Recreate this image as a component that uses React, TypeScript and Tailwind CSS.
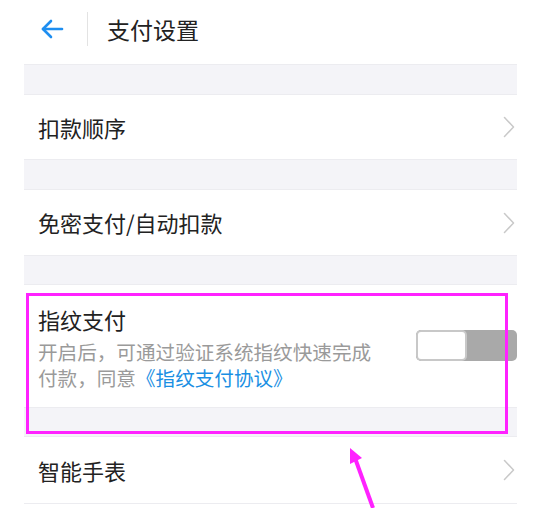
const font = { fontFamily: '"Noto Sans CJK SC", "Noto Sans", sans-serif' }

function Gap({ h }: { h: string }) {
  return <div className={`${h} bg-[#f4f4f8] border-y border-[#ececf0]`} />
}

function Chevron() {
  return (
    <svg width="12" height="22" viewBox="0 0 12 22" fill="none" stroke="#c9c9c9" strokeWidth="1.5" strokeLinecap="round" strokeLinejoin="round">
      <path d="M1.5 1.5L10.5 11L1.5 20.5" />
    </svg>
  )
}

function Row({ label, h }: { label: string; h: string }) {
  return (
    <div className={`${h} flex items-center justify-between pl-[14px] pr-[2px]`}>
      <span className="text-[22px] text-[#222]">{label}</span>
      <Chevron />
    </div>
  )
}

export default function App() {
  return (
    <div className="relative w-[534px] h-[508px] bg-white overflow-hidden" style={font}>
      <div className="ml-[24px] w-[493px]">
        {/* Header */}
        <div className="h-[64px] flex items-center pb-[6px]">
          <svg className="ml-[16px] w-[24px] h-[22px]" viewBox="0 0 24 22" fill="none" stroke="#1e8ef0" strokeWidth="2.6" strokeLinecap="round" strokeLinejoin="round">
            <path d="M22 11H3" />
            <path d="M11 3L3 11L11 19" />
          </svg>
          <div className="ml-[23px] w-px h-[34px] bg-[#e3e3e3]" />
          <span className="ml-[19px] text-[23px] text-[#222]">支付设置</span>
        </div>

        <Gap h="h-[31px]" />
        <Row label="扣款顺序" h="h-[64px]" />
        <Gap h="h-[31px]" />
        <Row label="免密支付/自动扣款" h="h-[65px]" />
        <Gap h="h-[30px]" />

        {/* Fingerprint */}
        <div className="h-[122px] flex items-start pl-[14px]">
          <div className="flex-1 pt-[18px]">
            <div className="text-[22px] text-[#222] leading-[32px]">指纹支付</div>
            <div className="mt-[4px] text-[19.6px] text-[#9a9a9a] whitespace-nowrap">
              <div className="h-[26px] leading-[26px]">开启后，可通过验证系统指纹快速完成</div>
              <div className="h-[26px] leading-[26px]">
                付款，同意<span className="text-[#1a8fe3]">《指纹支付协议》</span>
              </div>
            </div>
          </div>
          <div className="mt-[45px] flex w-[101px] h-[31px] rounded-[5px] bg-[#a9a9a9] overflow-hidden shrink-0">
            <div className="w-[51px] h-full bg-white border-2 border-[#c8c8c8] rounded-[5px]" />
          </div>
        </div>

        <Gap h="h-[30px]" />
        <Row label="智能手表" h="h-[66px]" />
        <div className="h-px bg-[#ececf0]" />
      </div>

      {/* annotation */}
      <div className="absolute left-[26px] top-[293px] w-[482px] h-[141px] border-[3px] border-[#ff22ff]" />
      <svg className="absolute left-[330px] top-[440px]" width="60" height="68" viewBox="0 0 60 68">
        <path d="M20 8L20 24L32 18Z" fill="#ff22ff" />
        <path d="M25 18L43 68" stroke="#ff22ff" strokeWidth="4" />
      </svg>
    </div>
  )
}
